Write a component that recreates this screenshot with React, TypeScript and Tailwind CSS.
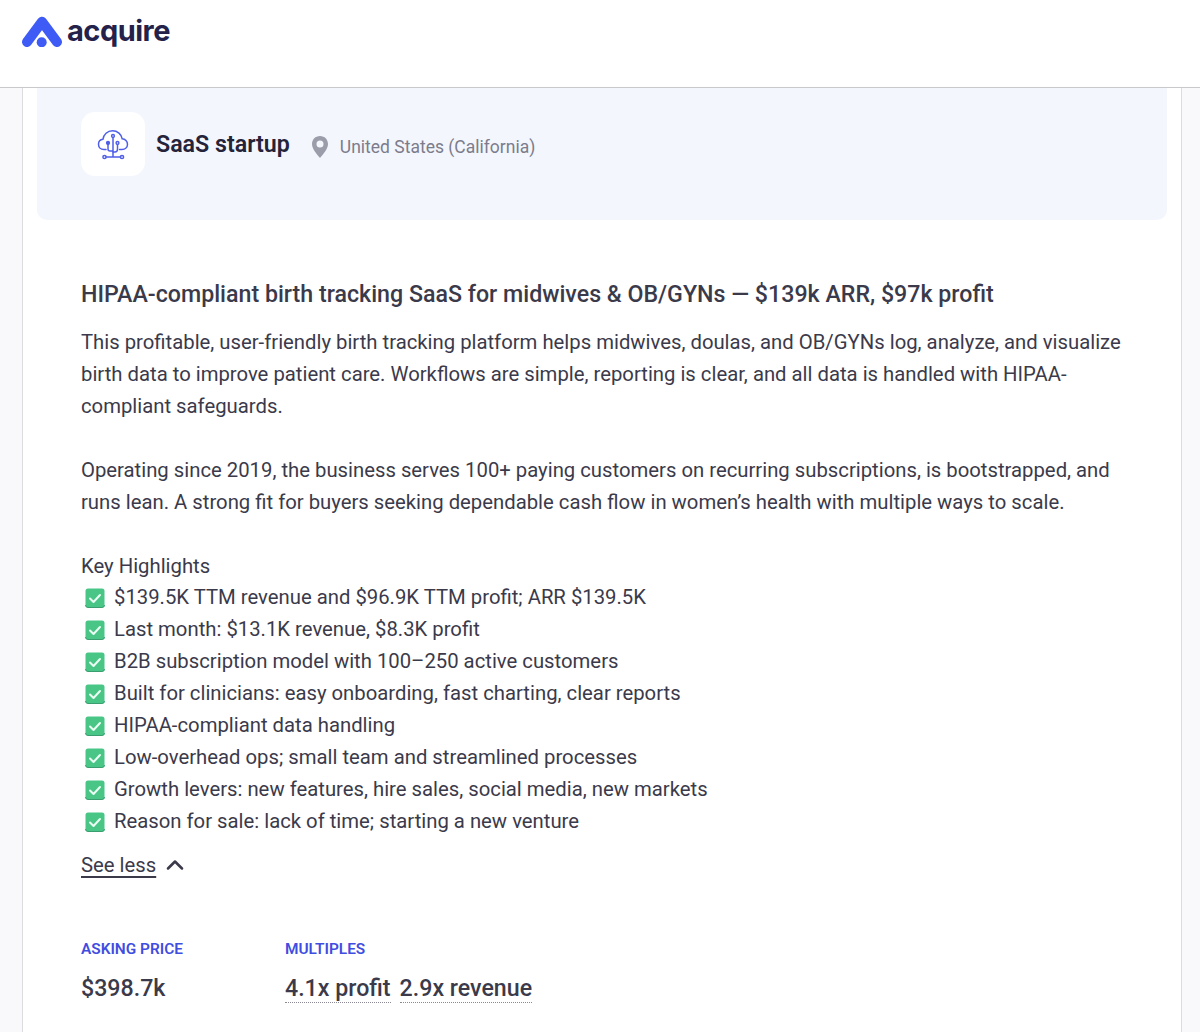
import React from 'react';
import { ChevronUp } from 'lucide-react';

const highlights = [
  '$139.5K TTM revenue and $96.9K TTM profit; ARR $139.5K',
  'Last month: $13.1K revenue, $8.3K profit',
  'B2B subscription model with 100–250 active customers',
  'Built for clinicians: easy onboarding, fast charting, clear reports',
  'HIPAA-compliant data handling',
  'Low-overhead ops; small team and streamlined processes',
  'Growth levers: new features, hire sales, social media, new markets',
  'Reason for sale: lack of time; starting a new venture',
];

function Logo() {
  return (
    <svg width="42" height="32" viewBox="0 0 42 32" className="shrink-0">
      <path
        d="M6 27 L21 6.7 L36 27"
        stroke="#3f5bf6"
        strokeWidth="10"
        strokeLinecap="round"
        strokeLinejoin="round"
        fill="none"
      />
      <circle cx="20.7" cy="27.3" r="5" fill="#3f5bf6" />
    </svg>
  );
}

function CloudIcon() {
  return (
    <svg width="32" height="32" viewBox="0 0 32 32" fill="none" stroke="#4f5fe8" strokeWidth="1.5" strokeLinecap="round">
      <path d="M9 21.5 H7 C3.5 21.5 1.5 19 1.5 16.2 C1.5 13.5 3.5 11.5 6 11.2 C6.5 6.5 10.5 2.8 15.5 2.8 C20.5 2.8 24.5 6.2 25.2 10.8 C28.2 11 30.5 13.5 30.5 16.3 C30.5 19.2 28.2 21.5 25 21.5 H22.5" />
      <circle cx="16" cy="8" r="1.4" />
      <circle cx="11" cy="15" r="1.4" fill="#4f5fe8" />
      <circle cx="20.5" cy="15" r="1.4" />
      <path d="M16 9.5 V24 M11 16.5 V21 Q11 23 13 23 H15 M20.5 16.5 V21 Q20.5 24 18 24 H16" />
      <circle cx="7.5" cy="29" r="1.6" />
      <circle cx="25" cy="29" r="1.6" />
      <path d="M9 29 H23.5 M16 24 V29" />
    </svg>
  );
}

function PinIcon() {
  return (
    <svg width="18" height="24" viewBox="0 0 18 24">
      <path
        fillRule="evenodd"
        d="M9 1 C4.3 1 1 4.6 1 9 C1 14 6 19.5 9 23 C12 19.5 17 14 17 9 C17 4.6 13.7 1 9 1 Z M9 5.5 A3.5 3.5 0 1 1 9 12.5 A3.5 3.5 0 1 1 9 5.5 Z"
        fill="#9c9daa"
      />
    </svg>
  );
}

function CheckBox() {
  return (
    <svg width="20" height="20" viewBox="0 0 20 20" className="shrink-0">
      <rect x="0.5" y="0.5" width="19" height="19" rx="2.5" fill="#49c585" />
      <path d="M0.5 17 V17 Q0.5 19.5 3 19.5 H17 Q19.5 19.5 19.5 17" stroke="#3a9e70" strokeWidth="1" fill="none" />
      <path d="M5 10.5 L8.5 14 L15 7" stroke="#eafff3" strokeWidth="2" fill="none" strokeLinecap="round" strokeLinejoin="round" />
    </svg>
  );
}

export default function App() {
  return (
    <div className="h-[1032px] overflow-hidden bg-[#f9f9fb] font-['Roboto',sans-serif] text-[#3b3a4a]">
      <header className="h-[88px] bg-white border-b border-[#c9c9cc] pl-[21px] pt-[15px]">
        <div className="flex items-start gap-1">
          <Logo />
          <span className="font-['Inter',sans-serif] font-bold text-[29px] leading-[32px] tracking-[-0.5px] text-[#24224a]">
            acquire
          </span>
        </div>
      </header>

      <main className="ml-[22px] mr-[18px] h-[944px] bg-white border-x border-[#dcdce0] px-[14px]">
        <section className="h-[132px] bg-[#f3f6fd] rounded-b-[10px] pl-[44px] pt-[24px] flex items-start">
          <div className="w-[64px] h-[64px] bg-white rounded-[14px] flex items-center justify-center">
            <CloudIcon />
          </div>
          <h1 className="ml-[11px] mt-[16px] text-[23.2px] leading-[32px] font-semibold text-[#24233a]">SaaS startup</h1>
          <div className="ml-[21px] mt-[22px] flex items-center gap-[11px]">
            <PinIcon />
            <span className="text-[17.5px] leading-[26px] text-[#7c7c8c]">United States (California)</span>
          </div>
        </section>

        <section className="pl-[44px] pr-[40px] pt-[58px]">
          <h2 className="text-[23.2px] leading-[32px] font-medium">
            HIPAA-compliant birth tracking SaaS for midwives &amp; OB/GYNs — $139k ARR, $97k profit
          </h2>
          <div className="mt-[17px] text-[20.3px] leading-[31.93px]">
            <p>
              This profitable, user-friendly birth tracking platform helps midwives, doulas, and OB/GYNs log, analyze, and visualize
              birth data to improve patient care. Workflows are simple, reporting is clear, and all data is handled with HIPAA-
              compliant safeguards.
            </p>
            <p className="mt-[31.93px]">
              Operating since 2019, the business serves 100+ paying customers on recurring subscriptions, is bootstrapped, and runs
              lean. A strong fit for buyers seeking dependable cash flow in women’s health with multiple ways to scale.
            </p>
            <p className="mt-[31.93px]">Key Highlights</p>
            <ul>
              {highlights.map((item) => (
                <li key={item} className="flex items-center gap-[9px] h-[31.93px] pl-[4px]">
                  <CheckBox />
                  <span>{item}</span>
                </li>
              ))}
            </ul>
          </div>

          <div className="mt-[11.5px] flex items-center gap-[5px] h-[32px]">
            <span className="text-[20.3px] underline decoration-2 underline-offset-[4px]">See less</span>
            <ChevronUp className="w-[28px] h-[28px]" strokeWidth={2.2} />
          </div>

          <div className="mt-[58px] flex">
            <div className="w-[204px]">
              <div className="text-[15.4px] leading-[20px] font-semibold text-[#3f4de0]">ASKING PRICE</div>
              <div className="mt-[13px] text-[23.2px] leading-[32px] font-medium">$398.7k</div>
            </div>
            <div>
              <div className="text-[15.4px] leading-[20px] font-semibold text-[#3f4de0]">MULTIPLES</div>
              <div className="mt-[15px] flex gap-[9px] text-[23.2px] leading-[28px] font-medium">
                <span className="border-b border-dotted border-[#8a8a94]">4.1x profit</span>
                <span className="border-b border-dotted border-[#8a8a94]">2.9x revenue</span>
              </div>
            </div>
          </div>
        </section>
      </main>
    </div>
  );
}
